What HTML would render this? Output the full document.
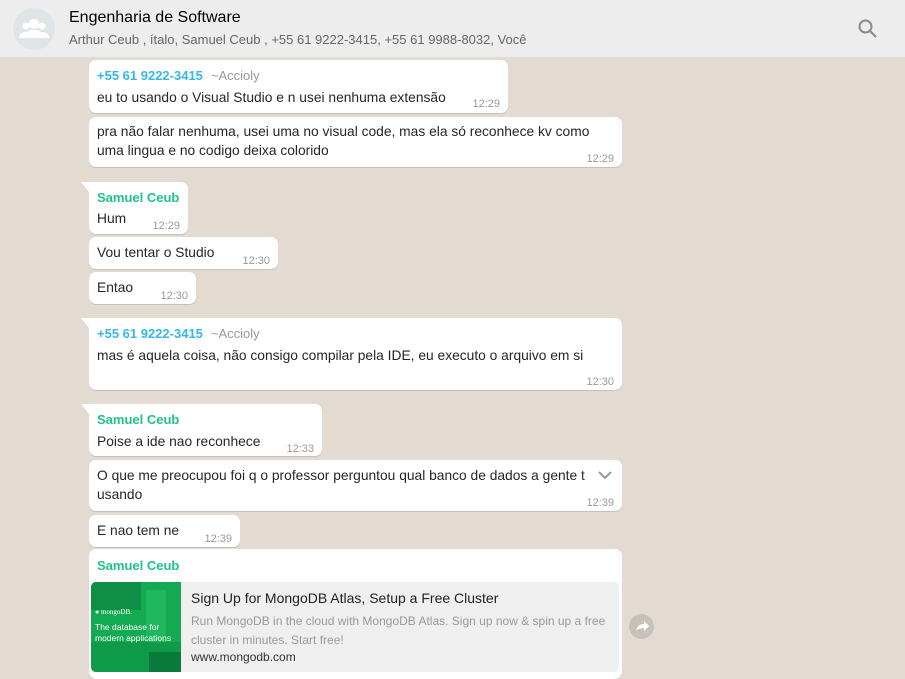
<!DOCTYPE html>
<html><head><meta charset="utf-8"><style>
*{margin:0;padding:0;box-sizing:border-box}
body{width:905px;height:674px;overflow:hidden;background:#e3dbd2;font-family:"Liberation Sans",sans-serif;position:relative}
.hdr{position:absolute;left:0;top:0;width:905px;height:58px;background:#ededed;border-bottom:1px solid #ddd}
.av{position:absolute;left:13px;top:8px;width:42px;height:42px;border-radius:50%;background:#dfe5e7}
.t1{position:absolute;left:69px;top:9px;font-size:16px;color:#000}
.t2{position:absolute;left:69px;top:32px;font-size:13px;color:#666}
.b{position:absolute;left:89px;background:#fff;border-radius:7px;box-shadow:0 1px 0.5px rgba(0,0,0,.13);font-size:13.8px;color:#262626}
.b .n{position:absolute;left:8px;font-size:13px;font-weight:bold}
.b .x{position:absolute;left:8px;line-height:19px}
.b .tm{position:absolute;right:8px;font-size:11px;color:#999}
.g{color:#1fc28b}.bl{color:#35b8e6}.al{color:#999;font-weight:normal;margin-left:8px}
.tail{position:absolute;left:-8px;top:0;width:0;height:0;border-top:0 solid transparent;border-right:8px solid #fff;border-bottom:10px solid transparent}
</style></head><body>
<div class="hdr">
<div class="av"><svg width="42" height="42"><g fill="#fff"><circle cx="21" cy="16" r="5"/><circle cx="13" cy="18" r="3.5"/><circle cx="29" cy="18" r="3.5"/><path d="M12 30c0-6 4-8 9-8s9 2 9 8z"/><path d="M6 30c0-4 3-6 6-6 2 0 3 1 3 1-2 2-3 3-3 5z"/><path d="M36 30c0-4-3-6-6-6-2 0-3 1-3 1 2 2 3 3 3 5z"/></g></svg></div>
<div class="t1">Engenharia de Software</div>
<div class="t2">Arthur Ceub , ítalo, Samuel Ceub , +55 61 9222-3415, +55 61 9988-8032, Você</div>
<svg style="position:absolute;left:857px;top:18px" width="22" height="22"><circle cx="8.5" cy="8.5" r="6" fill="none" stroke="#8a8a8a" stroke-width="2"/><path d="M13 13l6 6" stroke="#8a8a8a" stroke-width="2.2"/></svg>
</div>

<div class="b" style="top:60px;width:419px;height:53px"><div class="n bl" style="top:8px">+55 61 9222-3415<span class="al">~Accioly</span></div><div class="x" style="top:28px">eu to usando o Visual Studio e n usei nenhuma extensão</div><div class="tm" style="top:38px">12:29</div></div>
<div class="b" style="top:117px;width:533px;height:50px"><div class="x" style="top:5px">pra não falar nenhuma, usei uma no visual code, mas ela só reconhece kv como<br>uma lingua e no codigo deixa colorido</div><div class="tm" style="top:36px">12:29</div></div>

<div class="b" style="top:182px;width:99px;height:52px;border-top-left-radius:0"><div class="tail"></div><div class="n g" style="top:8px">Samuel Ceub</div><div class="x" style="top:27px">Hum</div><div class="tm" style="top:38px">12:29</div></div>
<div class="b" style="top:237px;width:189px;height:32px"><div class="x" style="top:6px">Vou tentar o Studio</div><div class="tm" style="top:18px">12:30</div></div>
<div class="b" style="top:272px;width:107px;height:32px"><div class="x" style="top:6px">Entao</div><div class="tm" style="top:18px">12:30</div></div>

<div class="b" style="top:318px;width:533px;height:72px;border-top-left-radius:0"><div class="tail"></div><div class="n bl" style="top:8px">+55 61 9222-3415<span class="al">~Accioly</span></div><div class="x" style="top:28px">mas é aquela coisa, não consigo compilar pela IDE, eu executo o arquivo em si</div><div class="tm" style="top:58px">12:30</div></div>

<div class="b" style="top:404px;width:233px;height:52px;border-top-left-radius:0"><div class="tail"></div><div class="n g" style="top:8px">Samuel Ceub</div><div class="x" style="top:28px">Poise a ide nao reconhece</div><div class="tm" style="top:39px">12:33</div></div>
<div class="b" style="top:460px;width:533px;height:51px;overflow:hidden"><div class="x" style="top:6px;white-space:nowrap">O que me preocupou foi q o professor perguntou qual banco de dados a gente t<br>usando</div><div style="position:absolute;right:0;top:0;width:40px;height:30px;background:linear-gradient(90deg,rgba(255,255,255,0),#fff 40%)"></div><svg style="position:absolute;left:508px;top:9px" width="16" height="12"><path d="M2 3l6 6 6-6" fill="none" stroke="#999" stroke-width="2"/></svg><div class="tm" style="top:37px">12:39</div></div>
<div class="b" style="top:515px;width:151px;height:32px"><div class="x" style="top:6px">E nao tem ne</div><div class="tm" style="top:18px">12:39</div></div>

<div class="b" style="top:549px;width:533px;height:130px"><div class="n g" style="top:9px">Samuel Ceub</div>
<div style="position:absolute;left:2px;top:33px;width:528px;height:90px;background:#efefef;border-radius:5px;overflow:hidden">
<div style="position:absolute;left:0;top:0;width:90px;height:90px;background:#13aa52">
<div style="position:absolute;left:0;top:0;width:50px;height:28px;background:#0e8f45"></div>
<div style="position:absolute;left:55px;top:8px;width:20px;height:60px;background:#20b85e"></div>
<div style="position:absolute;left:0;top:60px;width:90px;height:30px;background:#0f9a4a"></div>
<div style="position:absolute;left:58px;top:70px;width:32px;height:20px;background:#0a7a3b"></div>
<div style="position:absolute;left:4px;top:26px;font-size:7px;color:#fff;font-family:'Liberation Serif',serif">● mongoDB.</div>
<div style="position:absolute;left:4px;top:40px;font-size:8.5px;line-height:11px;color:#fff">The database for<br>modern applications</div></div>
<div style="position:absolute;left:100px;top:8px;font-size:14px;color:#222">Sign Up for MongoDB Atlas, Setup a Free Cluster</div>
<div style="position:absolute;left:100px;top:30px;font-size:12px;line-height:19px;color:#999">Run MongoDB in the cloud with MongoDB Atlas. Sign up now &amp; spin up a free<br>cluster in minutes. Start free!</div>
<div style="position:absolute;left:100px;top:68px;font-size:12px;color:#333">www.mongodb.com</div>
</div></div>
<div style="position:absolute;left:629px;top:614px;width:25px;height:25px;border-radius:50%;background:#c8c1b9"><svg width="25" height="25"><path d="M7 17c1-5 4-7 8-7V7l5 5-5 5v-3c-3 0-6 1-8 3z" fill="#fff"/></svg></div>
</body></html>
